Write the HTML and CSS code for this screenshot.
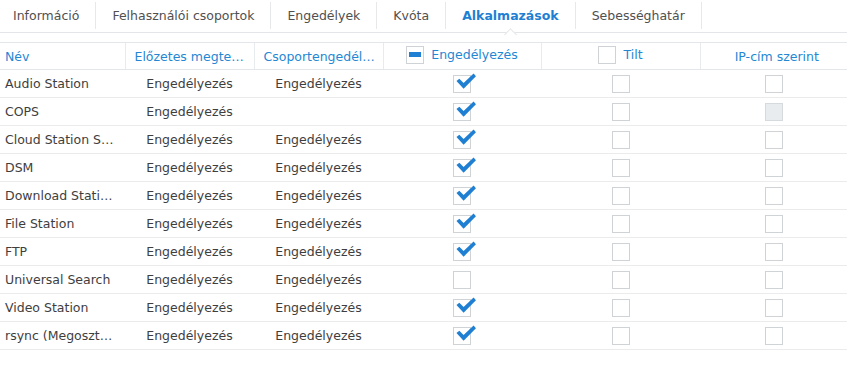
FILE: index.html
```html
<!DOCTYPE html>
<html lang="hu">
<head>
<meta charset="utf-8">
<title>Alkalmazások</title>
<link rel="stylesheet" href="styles.css">
</head>
<body>
<div class="tabs">
  <div class="tab">Információ</div>
  <div class="tab">Felhasználói csoportok</div>
  <div class="tab">Engedélyek</div>
  <div class="tab">Kvóta</div>
  <div class="tab active">Alkalmazások</div>
  <div class="tab">Sebességhatár</div>
</div>
<table class="grid">
  <colgroup>
    <col class="c1"><col class="c2"><col class="c3"><col class="c4"><col class="c5"><col class="c6">
  </colgroup>
  <thead>
    <tr>
      <th class="left">Név</th>
      <th>Előzetes megtekintés</th>
      <th>Csoportengedélyek</th>
      <th><span class="hcb"><span class="box minus"></span>Engedélyezés</span></th>
      <th><span class="hcb"><span class="box"></span>Tilt</span></th>
      <th>IP-cím szerint</th>
    </tr>
  </thead>
  <tbody>
    <tr><td class="left">Audio Station</td><td>Engedélyezés</td><td>Engedélyezés</td><td><span class="box checked"><svg viewBox="0 0 24 20" class="tick"><path d="M2.5 8.5 L5.5 6 L10 10.5 L20.5 0.5 L23 3.5 L10 16.5 Z"/></svg></span></td><td><span class="box"></span></td><td><span class="box"></span></td></tr>
    <tr><td class="left">COPS</td><td>Engedélyezés</td><td></td><td><span class="box checked"><svg viewBox="0 0 24 20" class="tick"><path d="M2.5 8.5 L5.5 6 L10 10.5 L20.5 0.5 L23 3.5 L10 16.5 Z"/></svg></span></td><td><span class="box"></span></td><td><span class="box disabled"></span></td></tr>
    <tr><td class="left">Cloud Station Server</td><td>Engedélyezés</td><td>Engedélyezés</td><td><span class="box checked"><svg viewBox="0 0 24 20" class="tick"><path d="M2.5 8.5 L5.5 6 L10 10.5 L20.5 0.5 L23 3.5 L10 16.5 Z"/></svg></span></td><td><span class="box"></span></td><td><span class="box"></span></td></tr>
    <tr><td class="left">DSM</td><td>Engedélyezés</td><td>Engedélyezés</td><td><span class="box checked"><svg viewBox="0 0 24 20" class="tick"><path d="M2.5 8.5 L5.5 6 L10 10.5 L20.5 0.5 L23 3.5 L10 16.5 Z"/></svg></span></td><td><span class="box"></span></td><td><span class="box"></span></td></tr>
    <tr><td class="left">Download Station</td><td>Engedélyezés</td><td>Engedélyezés</td><td><span class="box checked"><svg viewBox="0 0 24 20" class="tick"><path d="M2.5 8.5 L5.5 6 L10 10.5 L20.5 0.5 L23 3.5 L10 16.5 Z"/></svg></span></td><td><span class="box"></span></td><td><span class="box"></span></td></tr>
    <tr><td class="left">File Station</td><td>Engedélyezés</td><td>Engedélyezés</td><td><span class="box checked"><svg viewBox="0 0 24 20" class="tick"><path d="M2.5 8.5 L5.5 6 L10 10.5 L20.5 0.5 L23 3.5 L10 16.5 Z"/></svg></span></td><td><span class="box"></span></td><td><span class="box"></span></td></tr>
    <tr><td class="left">FTP</td><td>Engedélyezés</td><td>Engedélyezés</td><td><span class="box checked"><svg viewBox="0 0 24 20" class="tick"><path d="M2.5 8.5 L5.5 6 L10 10.5 L20.5 0.5 L23 3.5 L10 16.5 Z"/></svg></span></td><td><span class="box"></span></td><td><span class="box"></span></td></tr>
    <tr><td class="left">Universal Search</td><td>Engedélyezés</td><td>Engedélyezés</td><td><span class="box"></span></td><td><span class="box"></span></td><td><span class="box"></span></td></tr>
    <tr><td class="left">Video Station</td><td>Engedélyezés</td><td>Engedélyezés</td><td><span class="box checked"><svg viewBox="0 0 24 20" class="tick"><path d="M2.5 8.5 L5.5 6 L10 10.5 L20.5 0.5 L23 3.5 L10 16.5 Z"/></svg></span></td><td><span class="box"></span></td><td><span class="box"></span></td></tr>
    <tr><td class="left">rsync (Megosztott mappa szinkr.)</td><td>Engedélyezés</td><td>Engedélyezés</td><td><span class="box checked"><svg viewBox="0 0 24 20" class="tick"><path d="M2.5 8.5 L5.5 6 L10 10.5 L20.5 0.5 L23 3.5 L10 16.5 Z"/></svg></span></td><td><span class="box"></span></td><td><span class="box"></span></td></tr>
  </tbody>
</table>
</body>
</html>
```
FILE: styles.css
```css
* { box-sizing: border-box; }
html, body { margin: 0; padding: 0; background: #fff; }
body {
  font-family: "DejaVu Sans", "Noto Sans", sans-serif;
  font-size: 12.5px;
  color: #404040;
}
.tabs {
  display: flex;
  height: 33px;
  border-bottom: 1px solid #e3e5e8;
  margin-bottom: 9px;
}
.tab {
  position: relative;
  padding: 0 16px;
  color: #505050;
  border-right: 1px solid #e6e8ea;
  height: 27px;
  margin-top: 2px;
  line-height: 27px;
}
.tab:first-child { padding-left: 13px; }
.tab.active {
  font-weight: bold;
  color: #1f7fd2;
}
.tab.active::after {
  content: "";
  position: absolute;
  left: 50%;
  bottom: -10px;
  width: 8px;
  height: 8px;
  margin-left: -4px;
  background: #fff;
  border-left: 1px solid #e3e5e8;
  border-top: 1px solid #e3e5e8;
  transform: rotate(45deg);
}
.grid {
  width: 847px;
  table-layout: fixed;
  border-collapse: collapse;
}
.c1 { width: 125px; }
.c2 { width: 129px; }
.c3 { width: 129px; }
.c4 { width: 158px; }
.c5 { width: 159px; }
.c6 { width: 147px; }
th, td {
  padding: 0 10px;
  text-align: center;
  white-space: nowrap;
  overflow: hidden;
  text-overflow: ellipsis;
  vertical-align: middle;
}
th {
  font-weight: normal;
  color: #2487d4;
  border-top: 1px solid #e3e6ea;
  border-bottom: 1px solid #e3e6ea;
  border-left: 1px solid #e8ebee;
  height: 27px;
  padding: 0 3px 0 9px;
}
th:first-child { border-left: none; }
td {
  height: 28px;
  border-bottom: 1px solid #ebebeb;
  color: #3e3e3e;
}
.left { text-align: left; padding-left: 5px; padding-right: 11px; }
th.left { padding-left: 5px; }
.hcb {
  display: inline-flex;
  align-items: center;
  gap: 7px;
  margin-left: -6px;
}
.box {
  position: relative;
  display: inline-block;
  width: 18px;
  height: 18px;
  border: 1px solid #cfd3d6;
  background: #fff;
  vertical-align: middle;
}
.box.disabled { background: #e8ecef; border-color: #d6dadd; }
.box.minus::after {
  content: "";
  position: absolute;
  left: 2px;
  top: 5px;
  width: 12px;
  height: 5px;
  background: #1f7fd2;
}
.tick {
  position: absolute;
  left: 0px;
  top: -3px;
  width: 23px;
  height: 19px;
  overflow: visible;
}
.tick path { fill: #1f7fd2; }
```
